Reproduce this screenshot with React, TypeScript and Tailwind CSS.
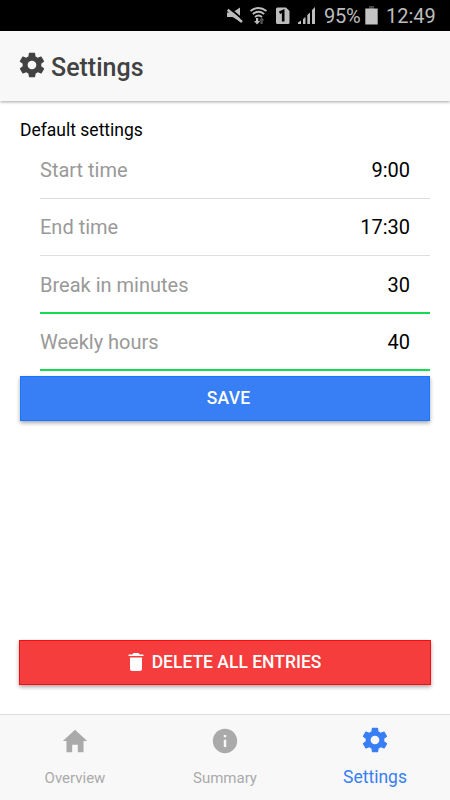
import React from "react";
import {
  IoMdHome,
  IoMdInformationCircle,
  IoMdSettings,
  IoMdTrash,
} from "react-icons/io";

function StatusBar() {
  return (
    <div className="flex h-[31px] shrink-0 items-center bg-black pl-[225px] text-[#bdbdbd]">
      <svg className="h-[31px] w-[98px] shrink-0" viewBox="225 0 98 31" fill="currentColor">
        <path d="M227 12.500h5.500l7.500-5v14l-7.500-4.500H227z" />
        <path d="M229 7.800L243.500 20" stroke="#000" strokeWidth="1.800" />
        <path d="M227.700 9.700L242 22" stroke="currentColor" strokeWidth="2.600" />
        <g fill="none" stroke="currentColor" strokeWidth="1.900">
          <path d="M250.500 11q8-6 16 0" />
          <path d="M252.800 14q5.700-4.500 11.400 0" />
          <path d="M255 17q3.500-3 7 0" />
        </g>
        <path d="M256 18h2.200v3h2l-3.100 3.500-3.100-3.500h2z" />
        <path fill="#555" d="M260.500 24v-3.500h-1.500l2.700-3 2.700 3h-1.700V24z" />
        <path d="M277.500 7.500h8.500l3.500 3.500v11.500q0 1.500-1.500 1.500h-10.500q-1.500 0-1.500-1.500V9q0-1.500 1.500-1.500z" />
        <path d="M279.500 12.700l3.700-1.700v10.500" fill="none" stroke="#000" strokeWidth="2.600" />
        <path d="M298 24v-1.500l3-2V24zM303 24v-5l2.500-2V24zM307.300 24v-9l2.700-2.500V24zM312 24V10l3-3v17z" />
      </svg>
      <span className="ml-px w-[37px] whitespace-nowrap pt-[2px] text-[20px] leading-[31px] tracking-[-0.3px]">95%</span>
      <svg className="ml-[4px] h-[31px] w-[13px] shrink-0" viewBox="365 0 13 31">
        <path fill="#444" d="M369 6h5v3h-5z" />
        <path fill="#c4c4c4" d="M365.300 8.500h12.400v16h-12.400z" />
      </svg>
      <span className="ml-[8px] whitespace-nowrap pt-[2px] text-[20px] leading-[31px]">12:49</span>
    </div>
  );
}

interface FieldProps {
  label: string;
  value: string;
  line: string;
}

function Field({ label, value, line }: FieldProps) {
  return (
    <div className={`ml-5 flex h-[57.500px] justify-between pr-5 pt-[14.500px] text-[20px] leading-[28px] ${line}`}>
      <span className="text-[#999]">{label}</span>
      <span className="text-black">{value}</span>
    </div>
  );
}

export default function App() {
  return (
    <div className="flex h-[800px] w-[450px] flex-col overflow-hidden bg-white font-['Roboto',sans-serif] text-black">
      <StatusBar />
      <header className="z-10 flex h-[70px] shrink-0 items-center bg-[#f8f8f8] pl-[17px] text-[#424242] shadow-[0_1px_3px_rgba(0,0,0,0.35)]">
        <IoMdSettings className="mb-[3px] size-[30px]" />
        <h1 className="ml-[4px] mt-[4px] text-[25px] font-medium leading-[30px]">Settings</h1>
      </header>

      <main className="flex grow flex-col px-5 pt-[19px]">
        <h2 className="h-[21px] text-[17.500px] leading-[21px]">Default settings</h2>
        <Field label="Start time" value="9:00" line="border-b border-[#dedede]" />
        <Field label="End time" value="17:30" line="border-b border-[#dedede]" />
        <Field label="Break in minutes" value="30" line="border-b-2 border-[#12dc50]" />
        <Field label="Weekly hours" value="40" line="border-b-2 border-[#12dc50]" />
        <button className="mt-[5px] h-[45px] shrink-0 border border-[#1976ff] bg-[#387ef5] pb-px pl-[7px] text-[17.500px] font-medium tracking-[0.2px] text-white shadow-[0_2px_4px_rgba(0,0,0,0.35)]">
          SAVE
        </button>
        <button className="-mx-px mb-[29px] mt-auto flex h-[45px] shrink-0 items-center justify-center border border-[#f80c0c] bg-[#f53d3d] pr-[5px] text-[17.500px] font-medium text-white shadow-[0_2px_4px_rgba(0,0,0,0.35)]">
          <IoMdTrash className="mb-px mr-[4px] size-[24px]" />
          <span className="pb-px">DELETE ALL ENTRIES</span>
        </button>
      </main>

      <nav className="grid h-[86px] shrink-0 grid-cols-3 border-t border-[#dedede] bg-[#f8f8f8] text-[#aaa]">
        <a className="flex flex-col items-center pt-[11px]">
          <IoMdHome className="size-[30px]" />
          <span className="mt-[12px] text-[15px] leading-[20px]">Overview</span>
        </a>
        <a className="flex flex-col items-center pt-[11px]">
          <IoMdInformationCircle className="size-[30px]" />
          <span className="mt-[12px] text-[15px] leading-[20px]">Summary</span>
        </a>
        <a className="flex flex-col items-center pt-[10px] text-[#387ef5]">
          <IoMdSettings className="size-[30px]" />
          <span className="mt-[12px] text-[17.500px] leading-[20px]">Settings</span>
        </a>
      </nav>
    </div>
  );
}
